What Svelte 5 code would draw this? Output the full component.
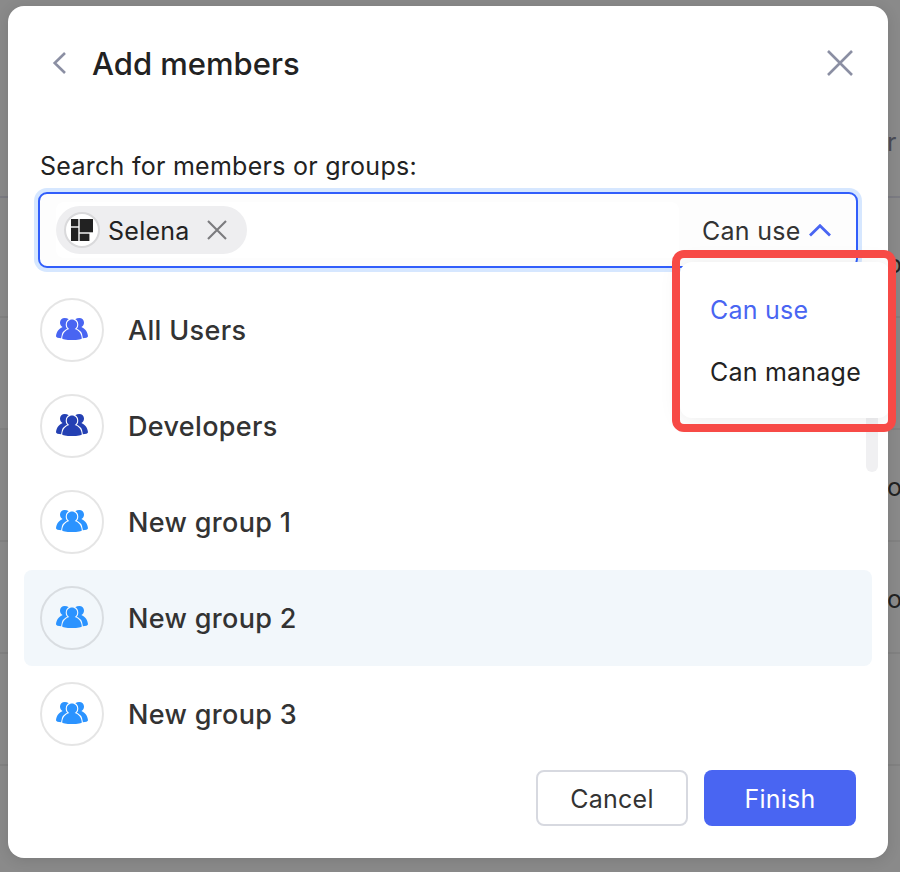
<script>
  const groups = [
    { name: 'All Users', color: '#4965f2' },
    { name: 'Developers', color: '#2440b3' },
    { name: 'New group 1', color: '#2b93ff' },
    { name: 'New group 2', color: '#2b93ff' },
    { name: 'New group 3', color: '#2b93ff' }
  ];
  const hovered = 'New group 2';
  const tableRows = [
    { text: 'r', kind: 'head' },
    { text: 'o', kind: 'first' },
    { text: '', kind: '' },
    { text: 'o', kind: '' },
    { text: 'o', kind: '' },
    { text: '', kind: '' },
    { text: '', kind: 'last' }
  ];
</script>

<div class="page">
  <div class="table">
    {#each tableRows as row}
      <div class="trow {row.kind}"><span>{row.text}</span></div>
    {/each}
  </div>

  <section class="modal">
    <header>
      <svg class="back" width="14" height="24" viewBox="0 0 14 24"><path d="M13 2 2.700 12 13 22" fill="none" stroke="#8b8fa3" stroke-width="2.6" /></svg>
      <h1>Add members</h1>
      <svg class="close" width="26" height="26" viewBox="0 0 26 26"><path d="M1 1 25 25M25 1 1 25" stroke="#8b8fa3" stroke-width="2.6" /></svg>
    </header>

    <p class="label">Search for members or groups:</p>

    <div class="field">
      <div class="selection">
        <span class="chip">
          <span class="mark">
            <svg width="22" height="22" viewBox="0 0 22 22" fill="#222">
              <rect x="0" y="0" width="7.300" height="7.300" /><rect x="8.700" y="0" width="13.300" height="13.300" />
              <rect x="0" y="8.700" width="7.300" height="13.300" /><rect x="8.700" y="14.700" width="9.700" height="7.300" />
            </svg>
          </span>
          <span class="chip-name">Selena</span>
          <svg class="remove" width="20" height="20" viewBox="0 0 20 20"><path d="M1 1 19 19M19 1 1 19" stroke="#7b7b7e" stroke-width="2.1" /></svg>
        </span>
      </div>
      <div class="role">
        <span>Can use</span>
        <svg width="22" height="13" viewBox="0 0 22 13"><path d="M1 11.500 11 1.700 21 11.500" fill="none" stroke="#4965f2" stroke-width="2.8" /></svg>
      </div>
      <div class="menu">
        <span class="active">Can use</span>
        <span>Can manage</span>
      </div>
      <div class="highlight"></div>
    </div>

    <div class="list">
      {#each groups as group}
        <div class="group" class:hovered={group.name === hovered}>
          <span class="avatar">
            <svg width="32" height="22" viewBox="0 0 32 22" fill={group.color}>
              <path d="M8.700 0C6 0 4 1.900 4 4.500 4 6.500 5 8.200 6.600 9 3 10.500 .3 14 0 18.300c0 1.300 2.500 2.100 6 2L13 14 11.500 9 12.800 1.200C11.500 .4 10.200 0 8.700 0Z" />
              <path d="M23.300 0C26 0 28 1.900 28 4.500 28 6.500 27 8.200 25.400 9 29 10.500 31.700 14 32 18.300c0 1.300-2.500 2.100-6 2L19 14 20.500 9 19.200 1.200C20.500 .4 21.800 0 23.300 0Z" />
              <path class="cut" d="M16 1.400c-3 0-5.200 2.300-5.200 5.100 0 2.100 1 3.700 2.500 4.600C9.300 12.200 6.500 15.800 6.200 20.200c0 1.200 4 1.800 9.800 1.800s9.800-.6 9.800-1.800c-.3-4.400-3.100-8-7.100-9.100 1.500-.9 2.500-2.500 2.500-4.600 0-2.800-2.200-5.100-5.200-5.100Z" />
            </svg>
          </span>
          <span class="group-name">{group.name}</span>
        </div>
      {/each}
      <div class="scrollbar"></div>
    </div>

    <footer>
      <button class="cancel">Cancel</button>
      <button class="finish">Finish</button>
    </footer>
  </section>
</div>

<style>
  .page { position: relative; width: 900px; height: 872px; overflow: hidden; background: #8a8a8a; font-family: Inter, 'Liberation Sans', sans-serif; font-size: 25px; letter-spacing: .27px; color: #222; }
  .page * { box-sizing: border-box; }
  .trow { height: 112px; border-bottom: 2px solid #828282; display: flex; align-items: center; padding: 4px 0 0 887px; }
  .trow.head { height: 198px; padding-top: 88px; border-color: #7c7c83; color: #4b4c56; }
  .trow.first { height: 120px; padding-top: 13px; }
  .trow.last { border: 0; }
  .modal { position: absolute; left: 8px; top: 6px; width: 880px; height: 852px; border-radius: 16px; background: #fff; box-shadow: 0 2px 14px rgba(0, 0, 0, .12); display: flex; flex-direction: column; }
  header { height: 114px; padding: 0 35px 0 44px; display: flex; align-items: center; }
  h1 { margin: 1px 0 0 26px; flex: 1; font-size: 31px; font-weight: 500; line-height: 40px; letter-spacing: 0; }
  .label { margin: 25px 0 0 32px; height: 43px; line-height: 43px; }
  .field { position: relative; margin: 4px 0 0 30px; width: 820px; height: 76px; flex: none; border: 2px solid #315efb; border-radius: 9px; box-shadow: 0 0 0 4px #d6e7ff; background: #fdfdfd; display: flex; align-items: center; }
  .selection { margin-left: 16px; width: 623px; height: 56px; background: #fff; border-radius: 8px; display: flex; align-items: center; }
  .chip { height: 48px; width: 191px; border-radius: 24px; background: #eeeef0; display: flex; align-items: center; padding-left: 8px; }
  .mark { width: 36px; height: 36px; flex: none; border: 2px solid #d9d9db; border-radius: 50%; background: #fff; display: flex; align-items: center; justify-content: center; }
  .chip-name { flex: none; width: 107px; padding: 2px 0 0 8px; }
  .remove { flex: none; }
  .role { margin-left: 23px; display: flex; align-items: center; gap: 8px; color: #333; white-space: nowrap; }
  .role span { padding-top: 2px; }
  .menu { position: absolute; z-index: 2; left: 640px; top: 68px; width: 210px; height: 156px; padding: 18px 0 0 30px; background: #fff; border-radius: 12px; box-shadow: 0 2px 22px rgba(0, 0, 0, .08); display: flex; flex-direction: column; letter-spacing: .22px; }
  .menu span { height: 62px; line-height: 60px; }
  .menu .active { color: #4965f2; }
  .highlight { position: absolute; z-index: 3; left: 632px; top: 56px; width: 224px; height: 182px; border: 8px solid #f74a46; border-radius: 12px; }
  .list { position: relative; margin: 14px 16px 0; }
  .group { height: 96px; padding-left: 16px; display: flex; align-items: center; border-radius: 8px; --surface: #fff; background: var(--surface); }
  .group.hovered { --surface: #f2f7fb; }
  .avatar { width: 64px; height: 64px; border: 2px solid rgba(0, 0, 0, .1); border-radius: 50%; display: flex; align-items: center; justify-content: center; padding-bottom: 2px; }
  .cut { stroke: var(--surface); stroke-width: 2.2; paint-order: stroke; }
  .group-name { margin-left: 24px; padding-top: 1px; font-size: 27px; line-height: 34px; font-weight: 500; color: #333; letter-spacing: .33px; }
  .scrollbar { position: absolute; right: -6px; top: 60px; width: 12px; height: 130px; border-radius: 6px; background: #f0f0f2; }
  footer { margin: 8px 32px 0 0; display: flex; justify-content: flex-end; gap: 16px; }
  button { width: 152px; height: 56px; border-radius: 8px; font: inherit; letter-spacing: .25px; padding: 1px 0 0; }
  .cancel { background: #fff; border: 2px solid #d7d9e0; color: #333; }
  .finish { background: #4965f2; border: 0; color: #fff; }
</style>
